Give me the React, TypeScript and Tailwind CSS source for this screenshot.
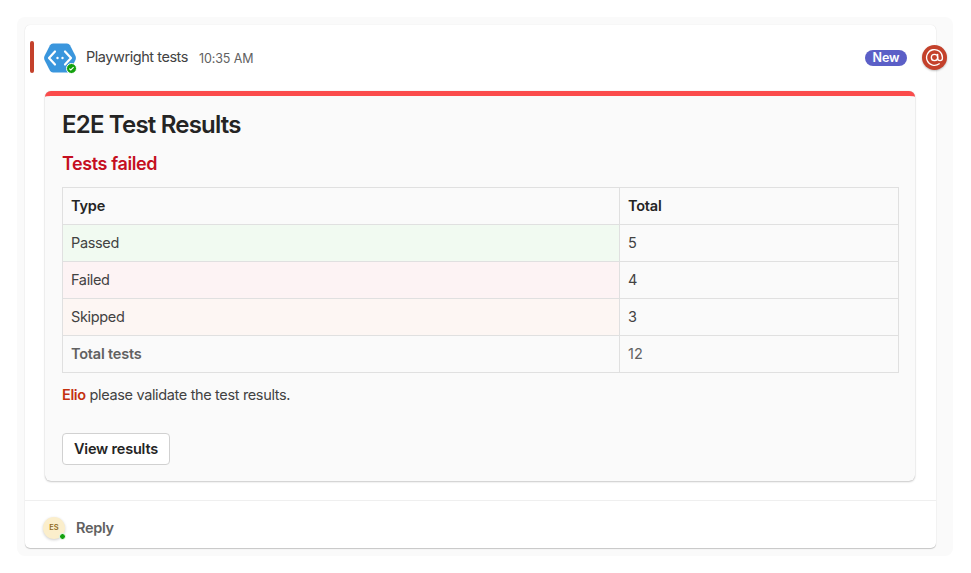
const font = { fontFamily: "Inter, 'Noto Sans', sans-serif" };

const rows = [
  { type: "Type", total: "Total", cls: "bg-[#fafafa] text-[#242424] font-semibold tracking-[-0.2px]", totalCls: "font-semibold text-[#242424] tracking-[-0.2px]" },
  { type: "Passed", total: "5", cls: "bg-[#f1faf1] text-[#424242] tracking-[-0.35px]", totalCls: "text-[#424242]" },
  { type: "Failed", total: "4", cls: "bg-[#fdf3f4] text-[#424242] tracking-[-0.35px]", totalCls: "text-[#424242]" },
  { type: "Skipped", total: "3", cls: "bg-[#fdf6f3] text-[#424242] tracking-[-0.35px]", totalCls: "text-[#424242]" },
  { type: "Total tests", total: "12", cls: "bg-[#fafafa] text-[#616161] font-semibold tracking-[-0.2px]", totalCls: "text-[#616161]" },
];

const BotIcon = () => (
  <div className="relative w-[32px] h-[30px] shrink-0">
    <svg width="32" height="30" viewBox="0 0 32 30">
      <path d="M9 0.5 H23 Q25 0.5 26 2.3 L31.5 13 Q32.3 15 31.5 17 L26 27.7 Q25 29.5 23 29.5 H9 Q7 29.5 6 27.7 L0.5 17 Q-0.3 15 0.5 13 L6 2.3 Q7 0.5 9 0.5 Z" fill="#3a96dd" />
      <path d="M11 8.5 L5 15 L11 21.5 M21 8.5 L27 15 L21 21.5" fill="none" stroke="#fff" strokeWidth="2.2" strokeLinecap="round" strokeLinejoin="round" />
      <circle cx="13.5" cy="15" r="1.2" fill="#fff" />
      <circle cx="18.5" cy="15" r="1.2" fill="#fff" />
    </svg>
    <div className="absolute right-[-1px] bottom-[-1px] w-[11px] h-[11px] rounded-full bg-[#13a10e] border border-white flex items-center justify-center">
      <svg width="7" height="7" viewBox="0 0 7 7">
        <path d="M1.3 3.7 L2.8 5 L5.6 2.2" fill="none" stroke="#fff" strokeWidth="1.1" />
      </svg>
    </div>
  </div>
);

export default function App() {
  return (
    <div className="w-[971px] h-[573px] bg-white pt-[17px] pl-[17px] overflow-hidden" style={font}>
      <div className="w-[936px] h-[539px] bg-[#fafafa] rounded-[8px] p-[8px]">
        <div className="relative w-[911px] h-[523px] bg-white rounded-[5px] shadow-[0_1px_1px_rgba(0,0,0,0.2),0_0_1px_rgba(0,0,0,0.12)] flex flex-col">
          <div className="relative flex items-center h-[66px] pl-[19px] pr-[29px]">
            <div className="absolute left-[5px] top-[16px] w-[4px] h-[32px] rounded-[2px] bg-[#c4412b]" />
            <BotIcon />
            <span className="ml-[10px] text-[14.5px] tracking-[-0.45px] text-[#424242] relative top-[-1px]">Playwright tests</span>
            <span className="ml-[11px] text-[12.5px] tracking-[-0.1px] text-[#616161] relative top-[1px]">10:35 AM</span>
            <span className="ml-auto h-[16px] w-[42px] rounded-full bg-[#5b5fc7] text-white text-[12.5px] font-semibold leading-[16px] text-center">New</span>
            <div className="absolute right-[-11px] top-[20px] w-[25px] h-[25px] rounded-full bg-[#c4412b] shadow-[0_1px_2px_rgba(0,0,0,0.25)] flex items-center justify-center">
              <svg width="19" height="19" viewBox="0 0 24 24" fill="none" stroke="#fff" strokeWidth="1.7" strokeLinecap="round">
                <circle cx="12" cy="12" r="4" />
                <path d="M16 8v5a3 3 0 0 0 6 0v-1a10 10 0 1 0-4 8" />
              </svg>
            </div>
          </div>

          <div className="ml-[20px] w-[870px] h-[390px] bg-[#fafafa] rounded-[6px] border-t-[5px] border-[#fb4b4b] shadow-[0_1px_2px_rgba(0,0,0,0.2),0_0_1px_rgba(0,0,0,0.2)] pl-[17px]">
            <div className="mt-[14px] text-[24px] leading-[30px] font-semibold tracking-[-0.8px] text-[#242424]">E2E Test Results</div>
            <div className="mt-[12px] text-[18px] leading-[24px] font-semibold tracking-[-0.4px] text-[#c50f1f]">Tests failed</div>
            <div className="mt-[11px] w-[837px] border border-[#e0e0e0] border-b-0">
              {rows.map((row) => (
                <div key={row.type} className="grid grid-cols-[557px_1fr] h-[37px] border-b border-[#e0e0e0] text-[14.5px]">
                  <div className={`flex items-center px-[8px] border-r border-[#e0e0e0] ${row.cls}`}>{row.type}</div>
                  <div className={`flex items-center px-[8px] ${row.totalCls}`}>{row.total}</div>
                </div>
              ))}
            </div>
            <p className="mt-[12px] text-[14.5px] leading-[20px] tracking-[-0.35px] text-[#424242]">
              <span className="font-semibold text-[#c4310f]">Elio</span> please validate the test results.
            </p>
            <button className="mt-[28px] block w-[108px] h-[32px] rounded-[4px] bg-white border border-[#d1d1d1] text-[14.5px] tracking-[-0.2px] font-semibold text-[#242424]">View results</button>
          </div>

          <div className="mt-[19px] flex-1 border-t border-[#efefef] flex items-center pl-[18px] pt-[6px]">
            <div className="relative w-[22px] h-[22px] rounded-full bg-[#fbeecb] shadow-[0_1px_3px_rgba(0,0,0,0.2)] flex items-center justify-center text-[7.5px] font-semibold text-[#8f6b1e]">
              ES
              <div className="absolute right-[-1px] bottom-[-1px] w-[7px] h-[7px] rounded-full bg-[#13a10e] border border-white" />
            </div>
            <span className="ml-[11px] text-[14.5px] tracking-[-0.3px] font-semibold text-[#616161]">Reply</span>
          </div>
        </div>
      </div>
    </div>
  );
}
